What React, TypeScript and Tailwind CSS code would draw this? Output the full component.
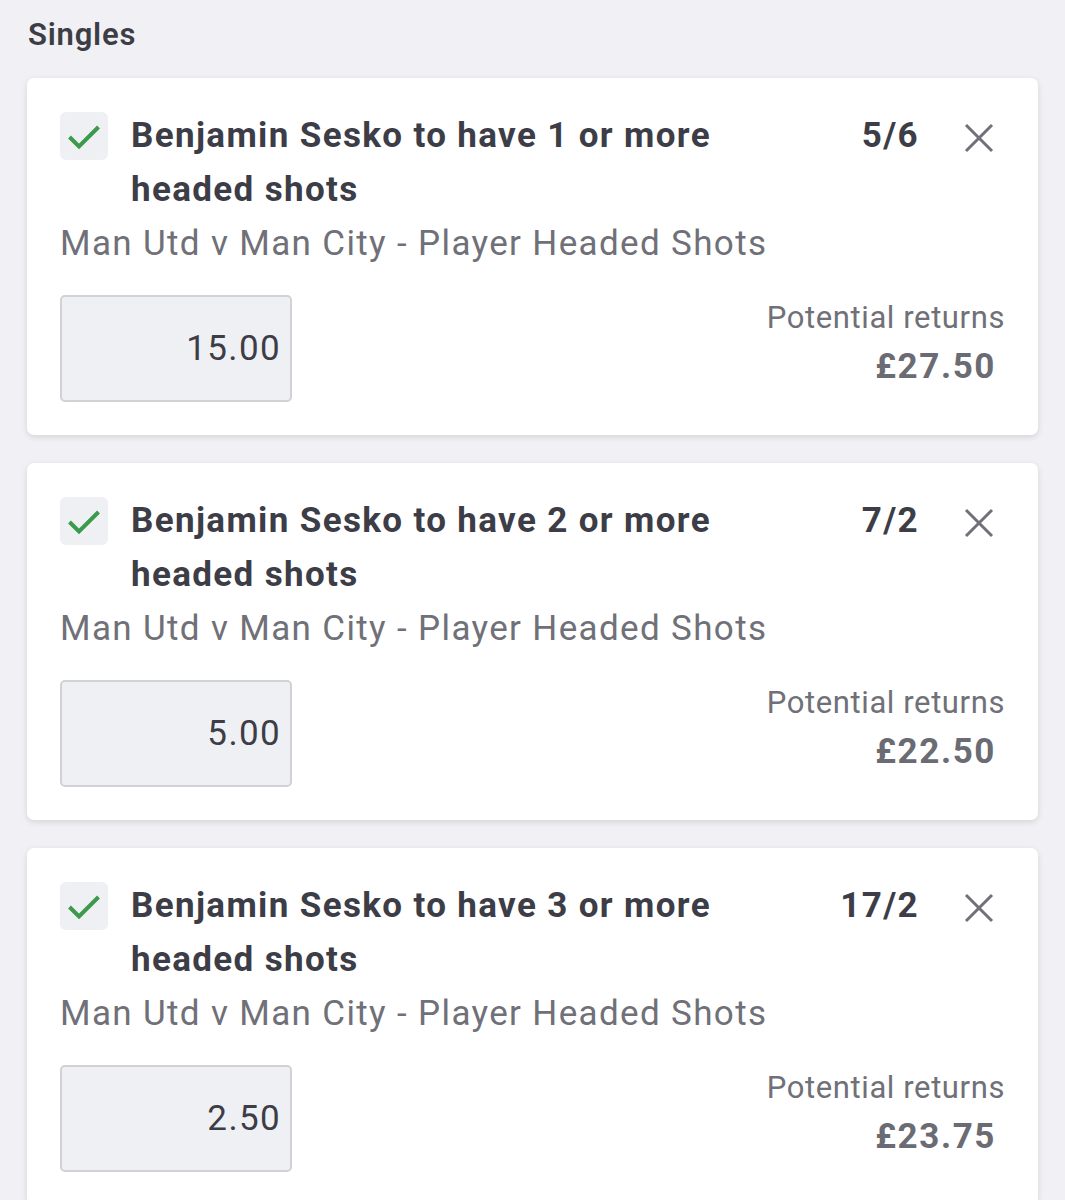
import React from "react";

type Bet = {
  n: number;
  odds: string;
  stake: string;
  returns: string;
};

const bets: Bet[] = [
  { n: 1, odds: "5/6", stake: "15.00", returns: "£27.50" },
  { n: 2, odds: "7/2", stake: "5.00", returns: "£22.50" },
  { n: 3, odds: "17/2", stake: "2.50", returns: "£23.75" },
];

function CheckIcon() {
  return (
    <svg width="48" height="48" viewBox="0 0 48 48" fill="none">
      <path d="M9.5 25l9.5 9.5L38.5 15" stroke="#3b9a4b" strokeWidth="4" />
    </svg>
  );
}

function CloseIcon() {
  return (
    <svg width="30" height="30" viewBox="0 0 30 30" fill="none">
      <path d="M2 2l26 26M28 2L2 28" stroke="#707078" strokeWidth="3" />
    </svg>
  );
}

function BetCard({ bet }: { bet: Bet }) {
  const title = `Benjamin Sesko to have ${bet.n} or more headed shots`;
  return (
    <div className="bg-white rounded-[7px] shadow-[0_2px_6px_rgba(0,0,0,0.12)] px-[33px] pt-[31px] pb-[33px] tracking-[1.35px]">
      <div className="flex items-start">
        <div className="mt-[3px] w-[48px] h-[48px] shrink-0 rounded-[6px] bg-[#eff0f4]">
          <CheckIcon />
        </div>
        <div className="ml-[23px] w-[640px] text-[35px] leading-[54px] font-bold text-[#3c3d46]">
          {title}
        </div>
        <div className="flex-1 text-right text-[35px] leading-[54px] font-bold text-[#3c3d46]">
          {bet.odds}
        </div>
        <button className="ml-[36px] mr-[2px] w-[48px] h-[54px] flex items-center justify-center pt-[3px]">
          <CloseIcon />
        </button>
      </div>
      <div className="text-[35px] leading-[54px] text-[#707078]">
        Man Utd v Man City - Player Headed Shots
      </div>
      <div className="mt-[24px] flex justify-between items-start">
        <div className="w-[232px] h-[107px] rounded-[5px] border-2 border-[#d2d2d6] bg-[#eff0f4] flex items-center justify-end pr-[9px] pt-[2px] text-[35px] text-[#3c3d46]">
          {bet.stake}
        </div>
        <div className="text-right">
          <div className="mt-[3px] text-[31px] leading-[40px] tracking-[0.6px] text-[#707078]">Potential returns</div>
          <div className="mt-[9px] pr-[9px] text-[35px] leading-[40px] tracking-[1.6px] font-bold text-[#6a6b73]">
            {bet.returns}
          </div>
        </div>
      </div>
    </div>
  );
}

export default function App() {
  return (
    <div
      className="min-h-screen bg-[#f1f1f5] px-[27px] pt-[15px] pb-10"
      style={{ fontFamily: "Roboto, 'Noto Sans', sans-serif" }}
    >
      <h2 className="pl-[1px] text-[31px] leading-[40px] font-semibold tracking-[0.8px] text-[#3c3d45] mb-[23px]">Singles</h2>
      <div className="flex flex-col gap-[28px]">
        {bets.map((b) => (
          <BetCard key={b.n} bet={b} />
        ))}
      </div>
    </div>
  );
}
